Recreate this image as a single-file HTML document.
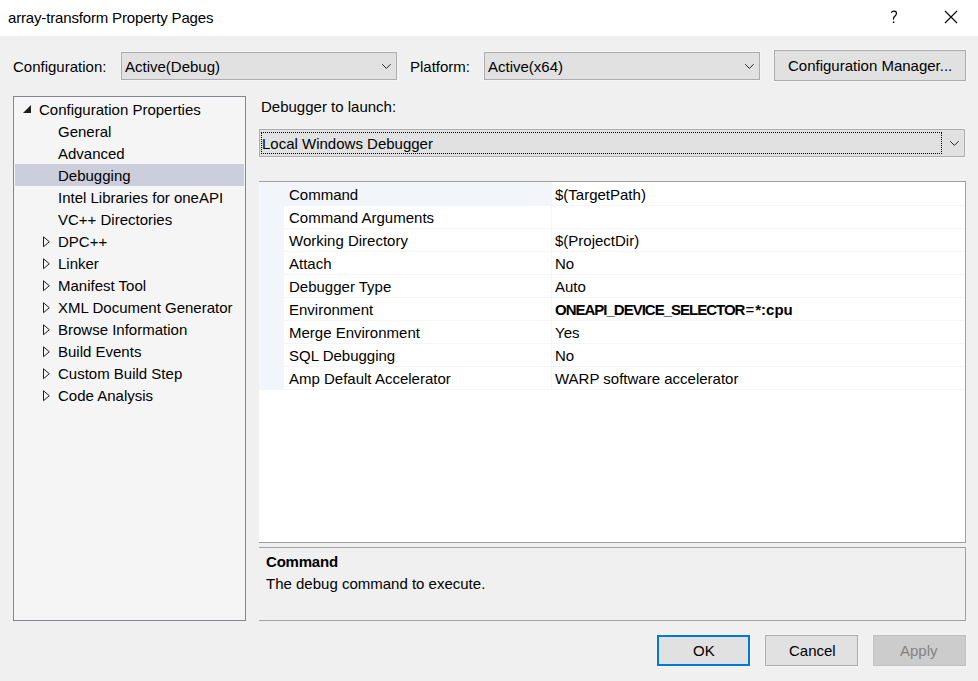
<!DOCTYPE html>
<html><head><meta charset="utf-8">
<style>
*{box-sizing:border-box;margin:0;padding:0}
html,body{width:978px;height:681px;overflow:hidden;background:#f0f0f0}
body{position:relative;font-family:"Liberation Sans",sans-serif;font-size:15px;color:#000}
.a{position:absolute}
.t{position:absolute;white-space:pre;line-height:17px;font-size:15px}
.title{left:0;top:0;width:978px;height:36px;background:#fff}
.combo{position:absolute;background:#e1e1e1;border:1px solid #adadad;box-shadow:0 0 0 1px rgba(255,255,255,.28)}
.btn{position:absolute;background:#e1e1e1;border:1px solid #adadad;box-shadow:0 0 0 1px rgba(255,255,255,.28)}
.chev{position:absolute;width:12px;height:7px}
.tree{left:13px;top:96px;width:233px;height:525px;background:#f5f5f5;border:1px solid #828790}
.sel{left:15px;top:164px;width:229px;height:22px;background:#cccedb}
.tri{position:absolute;width:0;height:0}
</style></head><body>
<div class="a title"></div>
<div class="t" style="left:8px;top:9px;letter-spacing:-0.16px">array-transform Property Pages</div>
<svg class="a" style="left:884px;top:6px" width="20" height="22" viewBox="0 0 20 22"><path d="M7.3 6.8C7.8 5.6 8.9 5.2 10 5.2C11.6 5.2 12.5 6.2 12.5 7.5C12.5 9 11 9.8 10.1 11C9.5 11.7 9.4 12.5 9.5 13.6" stroke="#000" stroke-width="1.25" fill="none"/><circle cx="9.6" cy="16.2" r="0.85" fill="#000"/></svg>
<svg class="a" style="left:944px;top:10px" width="14" height="14" viewBox="0 0 14 14"><path d="M1 1L13 13M13 1L1 13" stroke="#000" stroke-width="1.1" fill="none"/></svg>

<div class="t" style="left:13px;top:58px">Configuration:</div>
<div class="combo" style="left:121px;top:52px;width:276px;height:28px"></div>
<div class="t" style="left:125px;top:58px">Active(Debug)</div>
<svg class="a" style="left:381px;top:62px" width="12" height="8" viewBox="0 0 12 8"><path d="M1.2 2.2L5.4 6.4L9.6 2.2" stroke="#262626" stroke-width="1" fill="none"/></svg>

<div class="t" style="left:410px;top:58px">Platform:</div>
<div class="combo" style="left:484px;top:52px;width:276px;height:28px"></div>
<div class="t" style="left:488px;top:58px">Active(x64)</div>
<svg class="a" style="left:744px;top:62px" width="12" height="8" viewBox="0 0 12 8"><path d="M1.2 2.2L5.4 6.4L9.6 2.2" stroke="#262626" stroke-width="1" fill="none"/></svg>

<div class="btn" style="left:774px;top:50px;width:192px;height:31px"></div>
<div class="t" style="left:788px;top:57px">Configuration Manager...</div>

<div class="a tree"></div>
<div class="a sel"></div>
<svg class="a" style="left:23px;top:105px" width="9" height="9" viewBox="0 0 9 9"><path d="M8 0L8 8L0 8Z" fill="#1e1e1e"/></svg>
<div class="t" style="left:39px;top:101px">Configuration Properties</div>
<div class="t" style="left:58px;top:123px">General</div>
<div class="t" style="left:58px;top:145px">Advanced</div>
<div class="t" style="left:58px;top:167px">Debugging</div>
<div class="t" style="left:58px;top:189px">Intel Libraries for oneAPI</div>
<div class="t" style="left:58px;top:211px">VC++ Directories</div>
<svg class="a" style="left:42px;top:236px" width="10" height="12" viewBox="0 0 10 12"><path d="M1.5 0.8L1.5 10.7L7.3 5.75Z" stroke="#1e1e1e" stroke-width="1" fill="none"/></svg>
<svg class="a" style="left:42px;top:258px" width="10" height="12" viewBox="0 0 10 12"><path d="M1.5 0.8L1.5 10.7L7.3 5.75Z" stroke="#1e1e1e" stroke-width="1" fill="none"/></svg>
<svg class="a" style="left:42px;top:280px" width="10" height="12" viewBox="0 0 10 12"><path d="M1.5 0.8L1.5 10.7L7.3 5.75Z" stroke="#1e1e1e" stroke-width="1" fill="none"/></svg>
<svg class="a" style="left:42px;top:302px" width="10" height="12" viewBox="0 0 10 12"><path d="M1.5 0.8L1.5 10.7L7.3 5.75Z" stroke="#1e1e1e" stroke-width="1" fill="none"/></svg>
<svg class="a" style="left:42px;top:324px" width="10" height="12" viewBox="0 0 10 12"><path d="M1.5 0.8L1.5 10.7L7.3 5.75Z" stroke="#1e1e1e" stroke-width="1" fill="none"/></svg>
<svg class="a" style="left:42px;top:346px" width="10" height="12" viewBox="0 0 10 12"><path d="M1.5 0.8L1.5 10.7L7.3 5.75Z" stroke="#1e1e1e" stroke-width="1" fill="none"/></svg>
<svg class="a" style="left:42px;top:368px" width="10" height="12" viewBox="0 0 10 12"><path d="M1.5 0.8L1.5 10.7L7.3 5.75Z" stroke="#1e1e1e" stroke-width="1" fill="none"/></svg>
<svg class="a" style="left:42px;top:390px" width="10" height="12" viewBox="0 0 10 12"><path d="M1.5 0.8L1.5 10.7L7.3 5.75Z" stroke="#1e1e1e" stroke-width="1" fill="none"/></svg>
<div class="t" style="left:58px;top:233px">DPC++</div>
<div class="t" style="left:58px;top:255px">Linker</div>
<div class="t" style="left:58px;top:277px">Manifest Tool</div>
<div class="t" style="left:58px;top:299px">XML Document Generator</div>
<div class="t" style="left:58px;top:321px">Browse Information</div>
<div class="t" style="left:58px;top:343px">Build Events</div>
<div class="t" style="left:58px;top:365px">Custom Build Step</div>
<div class="t" style="left:58px;top:387px">Code Analysis</div>

<div class="t" style="left:261px;top:98px">Debugger to launch:</div>
<div class="combo" style="left:259px;top:129px;width:706px;height:28px"></div>
<div class="a" style="left:261px;top:132px;width:681px;height:22px;border:1px dotted #000"></div>
<div class="t" style="left:262px;top:135px">Local Windows Debugger</div>
<svg class="a" style="left:949px;top:139px" width="12" height="8" viewBox="0 0 12 8"><path d="M1.2 2.2L5.4 6.4L9.6 2.2" stroke="#262626" stroke-width="1" fill="none"/></svg>

<div class="a" style="left:259px;top:181px;width:707px;height:362px;background:#fff;border-top:1px solid #a0a0a0;border-right:1px solid #a0a0a0;border-bottom:1px solid #a0a0a0"></div>

<div class="a" style="left:259px;top:182px;width:25px;height:208px;background:#f2f5fa"></div>
<div class="a" style="left:284px;top:182px;width:268px;height:23px;background:#f2f5fa"></div>
<div class="a" style="left:284px;top:205px;width:681px;height:1px;background:#f2f5fa"></div>
<div class="a" style="left:284px;top:228px;width:681px;height:1px;background:#f2f5fa"></div>
<div class="a" style="left:284px;top:251px;width:681px;height:1px;background:#f2f5fa"></div>
<div class="a" style="left:284px;top:274px;width:681px;height:1px;background:#f2f5fa"></div>
<div class="a" style="left:284px;top:297px;width:681px;height:1px;background:#f2f5fa"></div>
<div class="a" style="left:284px;top:320px;width:681px;height:1px;background:#f2f5fa"></div>
<div class="a" style="left:284px;top:343px;width:681px;height:1px;background:#f2f5fa"></div>
<div class="a" style="left:284px;top:366px;width:681px;height:1px;background:#f2f5fa"></div>
<div class="a" style="left:284px;top:389px;width:681px;height:1px;background:#f2f5fa"></div>
<div class="a" style="left:551px;top:182px;width:1px;height:207px;background:#f2f5fa"></div>
<div class="t" style="left:289px;top:186px">Command</div>
<div class="t" style="left:555px;top:186px">$(TargetPath)</div>
<div class="t" style="left:289px;top:209px">Command Arguments</div>
<div class="t" style="left:289px;top:232px">Working Directory</div>
<div class="t" style="left:555px;top:232px">$(ProjectDir)</div>
<div class="t" style="left:289px;top:255px">Attach</div>
<div class="t" style="left:555px;top:255px">No</div>
<div class="t" style="left:289px;top:278px">Debugger Type</div>
<div class="t" style="left:555px;top:278px">Auto</div>
<div class="t" style="left:289px;top:301px">Environment</div>
<div class="t" style="left:555px;top:301px"><b style="letter-spacing:-1px">ONEAPI_DEVICE_SELECTOR</b><span style="margin:0 1px">=</span><b>*:cpu</b></div>
<div class="t" style="left:289px;top:324px">Merge Environment</div>
<div class="t" style="left:555px;top:324px">Yes</div>
<div class="t" style="left:289px;top:347px">SQL Debugging</div>
<div class="t" style="left:555px;top:347px">No</div>
<div class="t" style="left:289px;top:370px">Amp Default Accelerator</div>
<div class="t" style="left:555px;top:370px">WARP software accelerator</div>
<div class="a" style="left:259px;top:547px;width:707px;height:74px;border-top:1px solid #a0a0a0;border-right:1px solid #a0a0a0;border-bottom:1px solid #a0a0a0"></div>
<div class="t" style="left:266px;top:553px;font-weight:bold;letter-spacing:-0.2px">Command</div>
<div class="t" style="left:266px;top:575px">The debug command to execute.</div>

<div class="btn" style="left:657px;top:635px;width:93px;height:31px;border:2px solid #0078d7"></div>
<div class="t" style="left:693px;top:642px">OK</div>
<div class="btn" style="left:765px;top:635px;width:93px;height:31px"></div>
<div class="t" style="left:789px;top:642px">Cancel</div>
<div class="btn" style="left:873px;top:635px;width:93px;height:31px;background:#cccccc;border-color:#bfbfbf"></div>
<div class="t" style="left:900px;top:642px;color:#838383">Apply</div>
</body></html>
